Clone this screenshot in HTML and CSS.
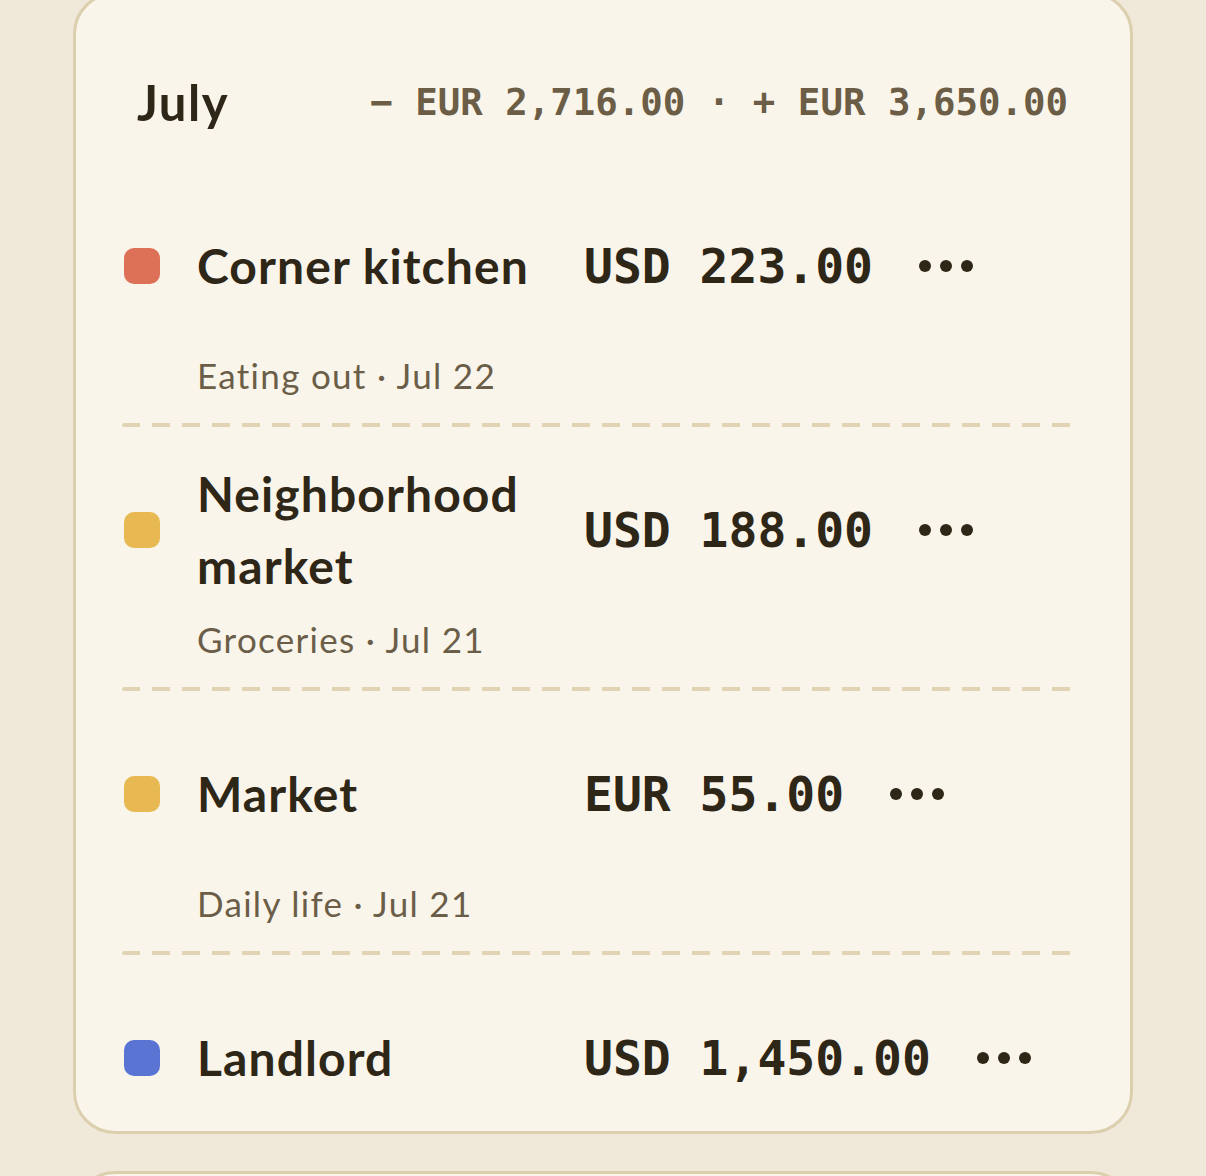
FILE: index.html
```html
<!DOCTYPE html>
<html lang="en">
<head>
    <meta charset="UTF-8">
    <meta name="viewport" content="width=device-width, initial-scale=1.0">
    <title>Transactions</title>
    <link rel="stylesheet" href="styles.css">
</head>
<body>
    <section class="card">
        <div class="month-head">
            <h2>July</h2>
            <div class="month-sum">− EUR 2,716.00 · + EUR 3,650.00</div>
        </div>

        <div class="tx">
            <div class="tx-main">
                <span class="dot dot-red"></span>
                <div class="tx-name">Corner kitchen</div>
                <div class="tx-amount">USD 223.00</div>
                <button class="tx-menu" aria-label="More">
                    <svg width="54" height="12" viewBox="0 0 54 12"><circle cx="6" cy="6" r="6"/><circle cx="27" cy="6" r="6"/><circle cx="48" cy="6" r="6"/></svg>
                </button>
            </div>
            <div class="tx-sub">Eating out · Jul 22</div>
            <div class="tx-sep"></div>
        </div>

        <div class="tx">
            <div class="tx-main">
                <span class="dot dot-yellow"></span>
                <div class="tx-name">Neighborhood market</div>
                <div class="tx-amount">USD 188.00</div>
                <button class="tx-menu" aria-label="More">
                    <svg width="54" height="12" viewBox="0 0 54 12"><circle cx="6" cy="6" r="6"/><circle cx="27" cy="6" r="6"/><circle cx="48" cy="6" r="6"/></svg>
                </button>
            </div>
            <div class="tx-sub">Groceries · Jul 21</div>
            <div class="tx-sep"></div>
        </div>

        <div class="tx">
            <div class="tx-main">
                <span class="dot dot-yellow"></span>
                <div class="tx-name">Market</div>
                <div class="tx-amount">EUR 55.00</div>
                <button class="tx-menu" aria-label="More">
                    <svg width="54" height="12" viewBox="0 0 54 12"><circle cx="6" cy="6" r="6"/><circle cx="27" cy="6" r="6"/><circle cx="48" cy="6" r="6"/></svg>
                </button>
            </div>
            <div class="tx-sub">Daily life · Jul 21</div>
            <div class="tx-sep"></div>
        </div>

        <div class="tx">
            <div class="tx-main">
                <span class="dot dot-blue"></span>
                <div class="tx-name">Landlord</div>
                <div class="tx-amount">USD 1,450.00</div>
                <button class="tx-menu" aria-label="More">
                    <svg width="54" height="12" viewBox="0 0 54 12"><circle cx="6" cy="6" r="6"/><circle cx="27" cy="6" r="6"/><circle cx="48" cy="6" r="6"/></svg>
                </button>
            </div>
        </div>
    </section>

    <section class="card card-next"></section>
</body>
</html>
```

FILE: styles.css
```css
body {
    margin: 0;
    background-color: #f0e8d8;
    font-family: Lato, "Noto Sans", sans-serif;
    color: #2e2718;
    overflow: hidden;
}
.card {
    box-sizing: border-box;
    height: 1142px;
    margin: -8px 73px 0;
    padding: 0 48px 0 46px;
    background-color: #faf5eb;
    border: 3px solid #dccfae;
    border-radius: 42px;
    overflow: hidden;
}
.card-next {
    margin-top: 37px;
    height: 200px;
}
.month-head {
    display: flex;
    justify-content: space-between;
    align-items: center;
    padding: 71px 14px 25px 15px;
    height: 72px;
}
.month-head h2 {
    margin: 0;
    font-size: 49px;
    line-height: 72px;
    font-weight: 700;
    letter-spacing: 1.5px;
}
.month-sum {
    font-family: "DejaVu Sans Mono", monospace;
    font-weight: 700;
    font-size: 37.4px;
    color: #6b5d46;
}
.tx {
    padding-top: 30px;
}
.tx-main {
    display: flex;
    align-items: center;
    min-height: 146px;
}
.dot {
    flex: none;
    width: 36px;
    height: 36px;
    margin-left: 2px;
    border-radius: 10px;
}
.dot-red { background-color: #dd7157; }
.dot-yellow { background-color: #e8b852; }
.dot-blue { background-color: #5a74d3; }
.tx-name {
    width: 357px;
    margin-left: 37px;
    font-size: 48px;
    line-height: 72px;
    font-weight: 700;
    letter-spacing: 1.1px;
}
.tx-amount {
    margin-left: 30px;
    font-family: "DejaVu Sans Mono", monospace;
    font-weight: 700;
    font-size: 48px;
    line-height: 72px;
}
.tx-menu {
    margin-left: 46px;
    padding: 0;
    border: none;
    background: none;
    fill: #2e2718;
    display: flex;
}
.tx-sub {
    margin: 10px 0 0 75px;
    font-size: 35px;
    line-height: 52px;
    color: #6b5e48;
    letter-spacing: 1.3px;
}
.tx-sep {
    height: 4px;
    margin-top: 22px;
    background-image: linear-gradient(to right, #e1d4b4 18px, transparent 18px);
    background-size: 30px 4px;
    background-repeat: repeat-x;
    border-radius: 2px;
}
```
